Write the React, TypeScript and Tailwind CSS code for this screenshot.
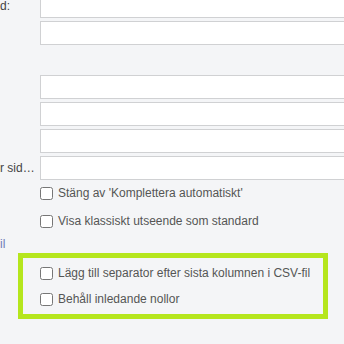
import React from "react";

const rows: { label: string; hidden?: boolean }[] = [
  { label: "d:" },
  { label: "" },
  { label: "", hidden: true },
  { label: "" },
  { label: "" },
  { label: "" },
  { label: "r sid…" },
];

const CheckRow = ({ text }: { text: string }) => (
  <label className="flex h-5 items-center gap-[5px]">
    <input type="checkbox" className="m-0 h-[13px] w-[13px] shrink-0" />
    <span className="whitespace-nowrap">{text}</span>
  </label>
);

export default function App() {
  return (
    <div
      className="h-[344px] w-[344px] overflow-hidden bg-[#f4f5f7] text-[12px] text-[#555]"
      style={{ fontFamily: '"Liberation Sans", Arial, sans-serif' }}
    >
      {/* input rows */}
      <div className="-mt-[6px] flex flex-col gap-[3px]">
        {rows.map((row, i) => (
          <div key={i} className="flex h-6 items-center">
            <div className="w-[40px] shrink-0 whitespace-nowrap text-left text-[#444]">
              {row.label}
            </div>
            {!row.hidden && (
              <input
                type="text"
                className="h-6 w-[400px] shrink-0 border border-[#d0d1d3] bg-white outline-none"
              />
            )}
          </div>
        ))}
      </div>

      <div className="ml-10 mt-[3px] flex flex-col gap-2">
        <CheckRow text="Stäng av 'Komplettera automatiskt'" />
        <CheckRow text="Visa klassiskt utseende som standard" />
      </div>

      <div className="mt-[5px] h-4 leading-4 text-[#6e7ab8]">il</div>

      <div className="ml-[18px] mt-[1px] flex h-[66px] w-[310px] flex-col gap-[6px] border-[5px] border-[#b5e61d] pl-[17px] pt-[5px]">
        <CheckRow text="Lägg till separator efter sista kolumnen i CSV-fil" />
        <CheckRow text="Behåll inledande nollor" />
      </div>
    </div>
  );
}
